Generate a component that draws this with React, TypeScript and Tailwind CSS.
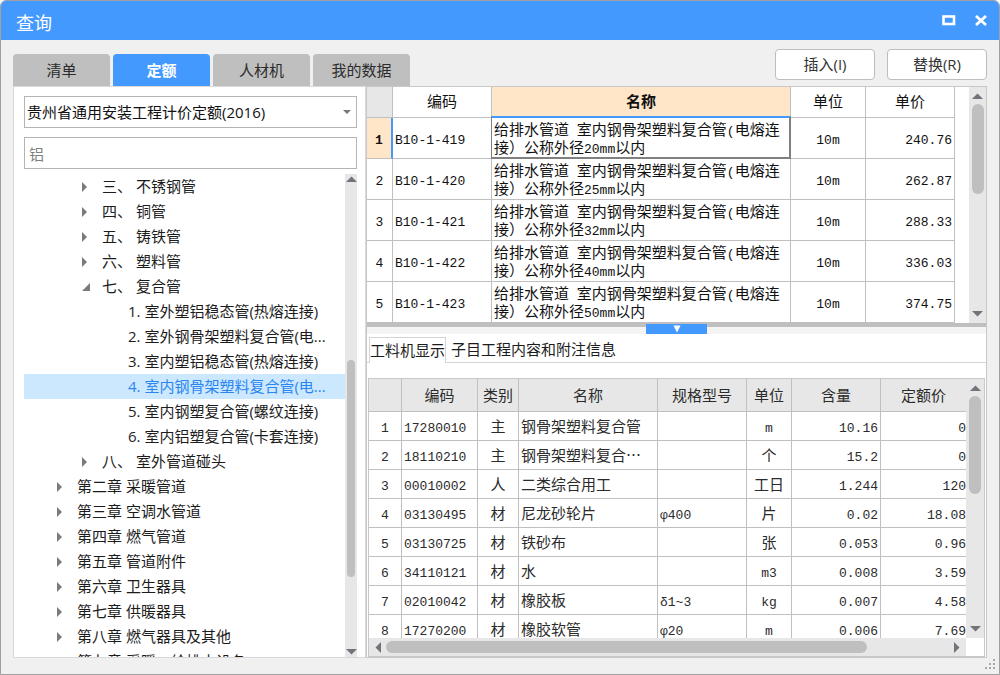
import { useState } from "react";
import clsx from "clsx";

type TreeItem = { level: 1 | 2 | 3; label: string; open?: boolean };

const TABS = ["清单", "定额", "人材机", "我的数据"];

const TREE: TreeItem[] = [
  { level: 2, label: "三、 不锈钢管" },
  { level: 2, label: "四、 铜管" },
  { level: 2, label: "五、 铸铁管" },
  { level: 2, label: "六、 塑料管" },
  { level: 2, label: "七、 复合管", open: true },
  { level: 3, label: "1. 室外塑铝稳态管(热熔连接)" },
  { level: 3, label: "2. 室外钢骨架塑料复合管(电..." },
  { level: 3, label: "3. 室内塑铝稳态管(热熔连接)" },
  { level: 3, label: "4. 室内钢骨架塑料复合管(电..." },
  { level: 3, label: "5. 室内钢塑复合管(螺纹连接)" },
  { level: 3, label: "6. 室内铝塑复合管(卡套连接)" },
  { level: 2, label: "八、 室外管道碰头" },
  { level: 1, label: "第二章 采暖管道" },
  { level: 1, label: "第三章 空调水管道" },
  { level: 1, label: "第四章 燃气管道" },
  { level: 1, label: "第五章 管道附件" },
  { level: 1, label: "第六章 卫生器具" },
  { level: 1, label: "第七章 供暖器具" },
  { level: 1, label: "第八章 燃气器具及其他" },
  { level: 1, label: "第九章 采暖、给排水设备" },
];

const QUOTAS = [
  { code: "B10-1-419", size: "20mm", price: "240.76" },
  { code: "B10-1-420", size: "25mm", price: "262.87" },
  { code: "B10-1-421", size: "32mm", price: "288.33" },
  { code: "B10-1-422", size: "40mm", price: "336.03" },
  { code: "B10-1-423", size: "50mm", price: "374.75" },
];

// code, category, name, spec, unit, amount, quota price
const MATERIALS = [
  ["17280010", "主", "钢骨架塑料复合管", "", "m", "10.16", "0"],
  ["18110210", "主", "钢骨架塑料复合⋯", "", "个", "15.2", "0"],
  ["00010002", "人", "二类综合用工", "", "工日", "1.244", "120"],
  ["03130495", "材", "尼龙砂轮片", "φ400", "片", "0.02", "18.08"],
  ["03130725", "材", "铁砂布", "", "张", "0.053", "0.96"],
  ["34110121", "材", "水", "", "m3", "0.008", "3.59"],
  ["02010042", "材", "橡胶板", "δ1~3", "kg", "0.007", "4.58"],
  ["17270200", "材", "橡胶软管", "φ20", "m", "0.006", "7.69"],
];

const MATERIAL_HEADERS = ["编码", "类别", "名称", "规格型号", "单位", "含量", "定额价"];

// Half-width characters are set in the mono face, the rest in the CJK face
function Mixed({ text }: { text: string }) {
  const parts = text.split(/([\x20-\x7e\u0370-\u03ff]+)/);
  return (
    <>
      {parts.map((part, i) =>
        i % 2 === 1 ? (
          <span key={i} className="whitespace-pre font-['Liberation_Mono',monospace] text-[13px] leading-none">
            {part}
          </span>
        ) : (
          part
        ),
      )}
    </>
  );
}

function Arrow({ dir }: { dir: "up" | "down" | "left" | "right" }) {
  const points = {
    up: "0,8 5.5,2.5 11,8",
    down: "0,3 11,3 5.5,8.5",
    left: "8,0 8,11 2.5,5.5",
    right: "3,0 3,11 8.5,5.5",
  };
  return (
    <svg viewBox="0 0 11 11" className="h-[11px] w-[11px] shrink-0 fill-[#73737b]">
      <polygon points={points[dir]} />
    </svg>
  );
}

function TreeArrow({ open }: { open?: boolean }) {
  return (
    <svg viewBox="0 0 10 10" className="h-2.5 w-2.5 fill-[#7b7b7b]">
      {open ? <polygon points="9,1 9,9 1,9" /> : <polygon points="1,0 6,5 1,10" />}
    </svg>
  );
}

function TreePanel() {
  const [selected, setSelected] = useState(8);

  return (
    <aside className="flex w-[353px] shrink-0 flex-col border border-[#d9d9d9] bg-white pt-[9px] pr-2 pl-2.5">
      <div className="relative">
        <select
          aria-label="定额库"
          className="h-8 w-full appearance-none border border-[#b4b4b4] bg-white pl-[2px] text-[15px] text-[#111] outline-none"
        >
          <option>贵州省通用安装工程计价定额(2016)</option>
        </select>
        <svg viewBox="0 0 8 4" className="pointer-events-none absolute top-3.5 right-1.5 h-1 w-2 fill-[#777]">
          <polygon points="0,0 8,0 4,4" />
        </svg>
      </div>
      <input
        aria-label="搜索"
        defaultValue="铝"
        className="mt-[9px] h-8 w-full border border-[#b4b4b4] bg-white pl-1 text-[15px] text-[#808080] outline-none"
      />
      <div className="mt-[5px] flex min-h-0 flex-1">
        <ul className="min-w-0 flex-1 overflow-hidden">
          {TREE.map((item, i) => (
            <li key={item.label}>
              <button
                onClick={() => setSelected(i)}
                className={clsx(
                  "flex h-[25px] w-full items-center text-left text-[15px] whitespace-nowrap",
                  item.level === 1 && "pl-8",
                  item.level === 2 && "pl-[57px]",
                  item.level === 3 && "pl-[104px]",
                  selected === i ? "bg-[#cce8ff] text-[#2b85ee]" : "text-[#1c1c1c]",
                )}
              >
                {item.level < 3 && (
                  <span className="w-[21px] shrink-0">
                    <TreeArrow open={item.open} />
                  </span>
                )}
                {item.label}
              </button>
            </li>
          ))}
        </ul>
        <div className="flex w-3 shrink-0 flex-col items-center bg-[#e7e7e7]">
          <Arrow dir="up" />
          <div className="flex-[175]" />
          <div className="w-2 flex-[217] rounded-full bg-[#bfbfbf]" />
          <div className="flex-[69]" />
          <Arrow dir="down" />
        </div>
      </div>
    </aside>
  );
}

function QuotaTable() {
  const head = "border-r border-b border-[#c0c0c0] pb-1 font-normal";
  const cell = "border-r border-b border-[#c0c0c0]";
  return (
    <div className="flex bg-white">
      <div className="min-w-0 flex-1 pr-3.5">
        <table className="w-full table-fixed border-separate border-spacing-0 text-[15px] leading-[17px] text-[#111]">
          <colgroup>
            <col className="w-[26px]" />
            <col className="w-[99px]" />
            <col />
            <col className="w-[75px]" />
            <col className="w-[89px]" />
          </colgroup>
          <thead>
            <tr className="h-[31px]">
              <th className={clsx(head, "bg-[#e7e7e7]")} />
              <th className={head}>编码</th>
              <th className="border-r border-b border-[#c0c0c0] bg-[#ffe6c9] pb-1 font-bold">名称</th>
              <th className={head}>单位</th>
              <th className={head}>单价</th>
            </tr>
          </thead>
          <tbody>
            {QUOTAS.map((row, i) => (
              <tr key={row.code} className="h-[41px]">
                <td
                  className={clsx(
                    "border-b border-[#c0c0c0] text-center",
                    i === 0 ? "border-r-2 border-r-[#4499ff] bg-[#ffe6c9] font-bold" : "border-r",
                  )}
                >
                  <Mixed text={String(i + 1)} />
                </td>
                <td className={clsx(cell, "pl-0.5")}>
                  <Mixed text={row.code} />
                </td>
                <td className={clsx(cell, "relative pl-0.5")}>
                  <Mixed text="给排水管道 室内钢骨架塑料复合管(电熔连" />
                  <br />
                  <Mixed text={`接）公称外径${row.size}以内`} />
                  {i === 0 && (
                    <span className="pointer-events-none absolute -top-0.5 -right-px -bottom-px -left-px border-2 border-l border-[#808080] border-t-[#4499ff]" />
                  )}
                </td>
                <td className={clsx(cell, "text-center")}>
                  <Mixed text="10m" />
                </td>
                <td className={clsx(cell, "pr-0.5 text-right")}>
                  <Mixed text={row.price} />
                </td>
              </tr>
            ))}
          </tbody>
        </table>
      </div>
      <div className="flex w-[17px] shrink-0 flex-col items-center bg-[#e7e7e7] py-1">
        <Arrow dir="up" />
        <div className="mt-0.5 h-[90px] w-3 rounded-full bg-[#bfbfbf]" />
        <div className="flex-1" />
        <Arrow dir="down" />
      </div>
    </div>
  );
}

function MaterialTable() {
  return (
    <div className="mr-px ml-px flex min-h-0 flex-1 flex-col border border-[#c8c8c8]">
      <div className="flex min-h-0 flex-1">
        <div className="min-w-0 flex-1 overflow-hidden">
          <table className="w-full table-fixed border-separate border-spacing-0 text-[15px] leading-5 text-[#2b2b2b]">
            <colgroup>
              <col className="w-[33px]" />
              <col className="w-[76px]" />
              <col className="w-[41px]" />
              <col />
              <col className="w-[89px]" />
              <col className="w-[45px]" />
              <col className="w-[89px]" />
              <col className="w-[85px]" />
            </colgroup>
            <thead>
              <tr className="h-[33px] bg-[#e7e7e7]">
                <th className="border-r border-b border-[#c0c0c0]" />
                {MATERIAL_HEADERS.map((h) => (
                  <th key={h} className="border-r border-b border-[#c0c0c0] font-normal last:border-r-0">
                    {h}
                  </th>
                ))}
              </tr>
            </thead>
            <tbody>
              {MATERIALS.map((row, i) => (
                <tr key={row[0]} className="h-[29px]">
                  <td className="border-r border-b border-[#c0c0c0] text-center">
                    <Mixed text={String(i + 1)} />
                  </td>
                  {row.map((value, col) => (
                    <td
                      key={col}
                      className={clsx(
                        "border-r border-b border-[#c0c0c0] whitespace-nowrap last:border-r-0",
                        (col === 0 || col === 2 || col === 3) && "pl-0.5",
                        (col === 1 || col === 4) && "text-center",
                        col === 5 && "pr-0.5 text-right",
                        col === 6 && "text-right",
                      )}
                    >
                      <Mixed text={value} />
                    </td>
                  ))}
                </tr>
              ))}
            </tbody>
          </table>
        </div>
        <div className="flex w-[18px] shrink-0 flex-col items-center bg-[#e7e7e7] py-1">
          <Arrow dir="up" />
          <div className="mt-0.5 h-[98px] w-3 rounded-full bg-[#bfbfbf]" />
          <div className="flex-1" />
          <Arrow dir="down" />
        </div>
      </div>
      <div className="flex h-[18px] shrink-0">
        <div className="flex flex-1 items-center bg-[#e7e7e7] px-1">
          <Arrow dir="left" />
          <div className="ml-0.5 h-3 flex-[481] rounded-full bg-[#bfbfbf]" />
          <div className="flex-[84]" />
          <Arrow dir="right" />
        </div>
        <div className="w-[18px] bg-white" />
      </div>
    </div>
  );
}

export default function App() {
  const [tab, setTab] = useState("定额");

  return (
    <div className="flex h-screen flex-col bg-white font-['Open_Sans','Noto_Sans_CJK_SC',sans-serif]">
      <div className="relative flex min-h-0 flex-1 flex-col overflow-hidden rounded-t-md border border-[#a0a0a0] bg-[#f0f0f0]">
        <header className="flex h-[39px] shrink-0 items-center justify-between bg-[#4499ff] pr-[11px] pl-[15px] text-white">
          <h1 className="mt-1 text-[18px] leading-6">查询</h1>
          <div className="flex items-center gap-[18px]">
            <button aria-label="最大化">
              <svg viewBox="0 0 14 12" className="h-3 w-3.5">
                <rect x="1.5" y="1.5" width="10.5" height="7.5" fill="none" stroke="currentColor" strokeWidth="2.6" />
              </svg>
            </button>
            <button aria-label="关闭">
              <svg viewBox="0 0 14 12" className="h-3 w-3.5">
                <path d="M2 1 L12 10 M12 1 L2 10" fill="none" stroke="currentColor" strokeWidth="2.8" />
              </svg>
            </button>
          </div>
        </header>

        <div className="flex min-h-0 flex-1 flex-col pr-3 pb-4 pl-3">
          <div className="flex h-[46px] shrink-0 items-end justify-between">
            <nav className="flex gap-[3px]">
              {TABS.map((name) => (
                <button
                  key={name}
                  onClick={() => setTab(name)}
                  className={clsx(
                    "h-8 w-[97px] rounded-t-sm text-[15px]",
                    tab === name ? "bg-[#4499ff] font-bold text-white" : "bg-[#bfbfbf] text-[#2b2b2b]",
                  )}
                >
                  {name}
                </button>
              ))}
            </nav>
            <div className="mb-1.5 flex gap-3">
              <button className="h-[31px] w-[100px] rounded-sm border border-[#bdbdbd] bg-white text-[15px] text-[#333]">
                插入(I)
              </button>
              <button className="h-[31px] w-[100px] rounded-sm border border-[#bdbdbd] bg-white text-[15px] text-[#333]">
                替换(R)
              </button>
            </div>
          </div>

          <div className="flex min-h-0 flex-1">
            <TreePanel />
            <main className="flex min-w-0 flex-1 flex-col border border-[#c8c8c8] bg-white font-['Noto_Sans_CJK_SC',sans-serif]">
              <QuotaTable />
              <div className="flex h-[11px] shrink-0 justify-center border-t-4 border-[#bfbfbf] bg-[#f4f4f4]">
                <button aria-label="折叠" className="relative -mt-[3px] flex h-2.5 w-[61px] items-center justify-center bg-[#4499ff]">
                  <svg viewBox="0 0 8 8" className="h-2 w-2 fill-white">
                    <polygon points="0.5,0.5 7.5,0.5 4,7.5" />
                  </svg>
                </button>
              </div>
              <div className="mb-[15px] flex h-[29px] shrink-0 items-end text-[15px] text-[#1c1c1c]">
                <div className="w-0.5 self-stretch border-b border-[#d4d4d4]" />
                <button className="h-[26px] border border-b-0 border-[#d4d4d4]">工料机显示</button>
                <button className="h-[26px] flex-1 border-b border-[#d4d4d4] pl-[5px] text-left">
                  子目工程内容和附注信息
                </button>
              </div>
              <MaterialTable />
            </main>
          </div>
        </div>
        <svg viewBox="0 0 11 11" className="absolute right-[3px] bottom-1 h-[11px] w-[11px] fill-[#a8a8a8]">
          <path d="M8 0h2v2h-2zM4 4h2v2h-2zM8 4h2v2h-2zM0 8h2v2h-2zM4 8h2v2h-2zM8 8h2v2h-2z" />
        </svg>
      </div>
    </div>
  );
}
